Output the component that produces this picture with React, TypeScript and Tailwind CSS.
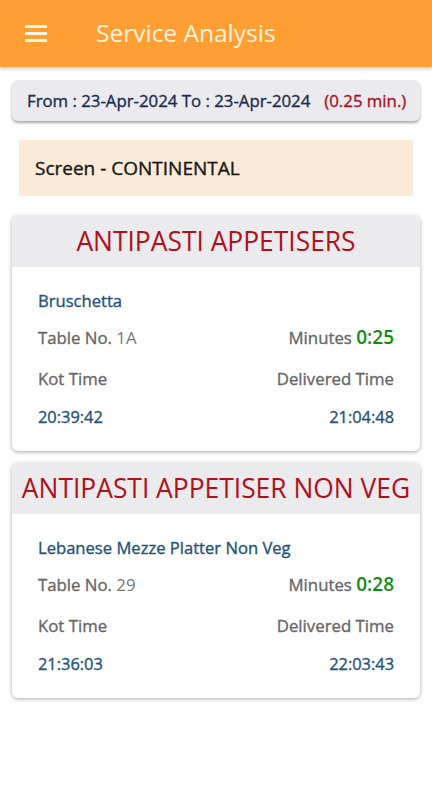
import React from "react";

type Item = {
  category: string;
  name: string;
  table: string;
  minutes: string;
  kot: string;
  delivered: string;
};

const items: Item[] = [
  {
    category: "ANTIPASTI APPETISERS",
    name: "Bruschetta",
    table: "1A",
    minutes: "0:25",
    kot: "20:39:42",
    delivered: "21:04:48",
  },
  {
    category: "ANTIPASTI APPETISER NON VEG",
    name: "Lebanese Mezze Platter Non Veg",
    table: "29",
    minutes: "0:28",
    kot: "21:36:03",
    delivered: "22:03:43",
  },
];

function Card({ item }: { item: Item }) {
  return (
    <div className="mx-3 rounded-md bg-white shadow-[0_1px_4px_rgba(0,0,0,0.35)] overflow-hidden">
      <div className="h-[51px] bg-[#ebeaed] flex items-center justify-center">
        <span className="text-[26.4px] text-[#b0101c] leading-none whitespace-nowrap">{item.category}</span>
      </div>
      <div className="px-[26px] pt-[23px] pb-[23px] flex flex-col [-webkit-text-stroke:0.35px_currentColor]">
        <div className="text-[16.6px] text-[#245278] leading-[22px]">{item.name}</div>
        <div className="mt-[13px] flex items-end justify-between leading-[24px]">
          <span className="text-[16.8px] text-[#666]">
            Table No. <span className="[-webkit-text-stroke:0px] text-[#777]">{item.table}</span>
          </span>
          <span className="text-[16.8px] text-[#666]">
            Minutes <span className="text-[19px] font-semibold text-[#138a13] [-webkit-text-stroke:0px]">{item.minutes}</span>
          </span>
        </div>
        <div className="mt-[18px] flex justify-between text-[16.8px] text-[#666] leading-[22px]">
          <span>Kot Time</span>
          <span>Delivered Time</span>
        </div>
        <div className="mt-[16px] flex justify-between text-[16.4px] text-[#245278] leading-[22px]">
          <span>{item.kot}</span>
          <span>{item.delivered}</span>
        </div>
      </div>
    </div>
  );
}

export default function App() {
  return (
    <div className="min-h-[800px] bg-white font-['Open_Sans',sans-serif]">
      <div className="h-[67px] bg-[#ff9f33] flex items-center shadow-[0_2px_4px_rgba(0,0,0,0.2)]">
        <div className="ml-[25px] w-[22px] flex flex-col gap-[4px]">
          <div className="h-[3px] bg-[#fff5e1]" />
          <div className="h-[3px] bg-[#fff5e1]" />
          <div className="h-[3px] bg-[#fff5e1]" />
        </div>
        <span className="ml-[49px] text-[24.5px] text-[#fff3dc] leading-none">Service Analysis</span>
      </div>

      <div className="mx-3 mt-[13px] h-[41px] rounded-md bg-[#ebebef] shadow-[0_2px_3px_rgba(0,0,0,0.35)] flex items-center pl-[15px] text-[16.8px] [-webkit-text-stroke:0.35px_currentColor]">
        <span className="text-[#1a2c4e]">From : 23-Apr-2024 To : 23-Apr-2024</span>
        <span className="ml-[14px] text-[#a8101c]">(0.25 min.)</span>
      </div>

      <div className="mx-[19px] mt-[19px] h-[56px] bg-[#fbead7] flex items-center pl-[16px] text-[19px] text-[#161616] [-webkit-text-stroke:0.35px_currentColor]">
        Screen - CONTINENTAL
      </div>

      <div className="mt-[20px] flex flex-col gap-[12px]">
        {items.map((it) => (
          <Card key={it.name} item={it} />
        ))}
      </div>
    </div>
  );
}
